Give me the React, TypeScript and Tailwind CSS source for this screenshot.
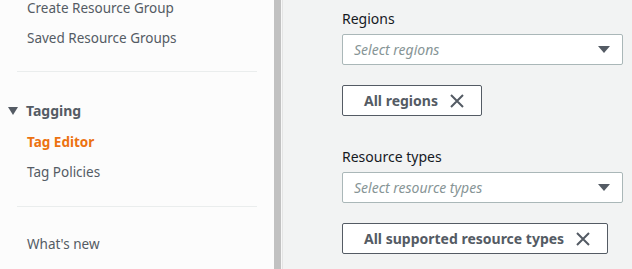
import React from "react";

function Caret() {
  return (
    <svg width="12" height="8" viewBox="0 0 12 8" className="shrink-0">
      <path d="M0 0 L12 0 L6 7 Z" fill="#545b64" />
    </svg>
  );
}

function XIcon() {
  return (
    <svg width="14" height="14" viewBox="0 0 14 14" className="shrink-0">
      <path d="M1 1 L13 13 M13 1 L1 13" stroke="#545b64" strokeWidth="2" fill="none" />
    </svg>
  );
}

function Field({ label, placeholder, token, labelTop }: { label: string; placeholder: string; token: string; labelTop: string }) {
  return (
    <div className={"flex flex-col " + labelTop}>
      <div className="text-[14px] leading-[22px] text-[#16191f]">{label}</div>
      <div className="mt-[4px] h-[31px] w-[281px] rounded-[2px] border border-[#aab7b8] bg-white flex items-center justify-between pl-[11px] pr-[12px]">
        <span className="text-[14px] italic text-[#879596]">{placeholder}</span>
        <Caret />
      </div>
      <div className="mt-[20px] self-start h-[31px] rounded-[2px] border border-[#545b64] bg-white flex items-center gap-[12px] pl-[21px] pr-[17px]">
        <span className="text-[14px] font-bold text-[#545b64]">{token}</span>
        <XIcon />
      </div>
    </div>
  );
}

export default function App() {
  return (
    <div
      className="flex w-[632px] h-[269px] overflow-hidden bg-[#f2f3f3]"
      style={{ fontFamily: '"Noto Sans", "Open Sans", sans-serif' }}
    >
      <aside className="w-[274px] shrink-0 bg-[#fcfcfc] flex flex-col text-[13.5px] text-[#545b64]">
        <div className="pl-[27px] mt-[-3px] leading-[22px]">Create Resource Group</div>
        <div className="pl-[27px] mt-[8px] leading-[22px]">Saved Resource Groups</div>
        <div className="mx-[17px] mt-[22px] border-t border-[#eaeded]" />
        <div className="mt-[28px] pl-[8px] flex items-center gap-[8px] leading-[22px]">
          <svg width="10" height="8" viewBox="0 0 10 8"><path d="M0 0 L10 0 L5 8 Z" fill="#545b64" /></svg>
          <span className="font-bold text-[14px] text-[#545b64]">Tagging</span>
        </div>
        <div className="pl-[27px] mt-[9px] leading-[22px] font-bold text-[#ec7211]">Tag Editor</div>
        <div className="pl-[27px] mt-[8px] leading-[22px]">Tag Policies</div>
        <div className="mx-[17px] mt-[23px] border-t border-[#eaeded]" />
        <div className="pl-[27px] mt-[26px] leading-[22px]">What's new</div>
      </aside>
      <div className="w-[7px] shrink-0 bg-[#c1c1c1]" />
      <div className="w-[1px] shrink-0 bg-[#f7f7f7]" />
      <div className="w-[1px] shrink-0 bg-[#e4e4e4]" />
      <main className="flex-1 pl-[59px] pt-[8px]">
        <Field label="Regions" placeholder="Select regions" token="All regions" labelTop="" />
        <Field label="Resource types" placeholder="Select resource types" token="All supported resource types" labelTop="mt-[30px]" />
      </main>
    </div>
  );
}
